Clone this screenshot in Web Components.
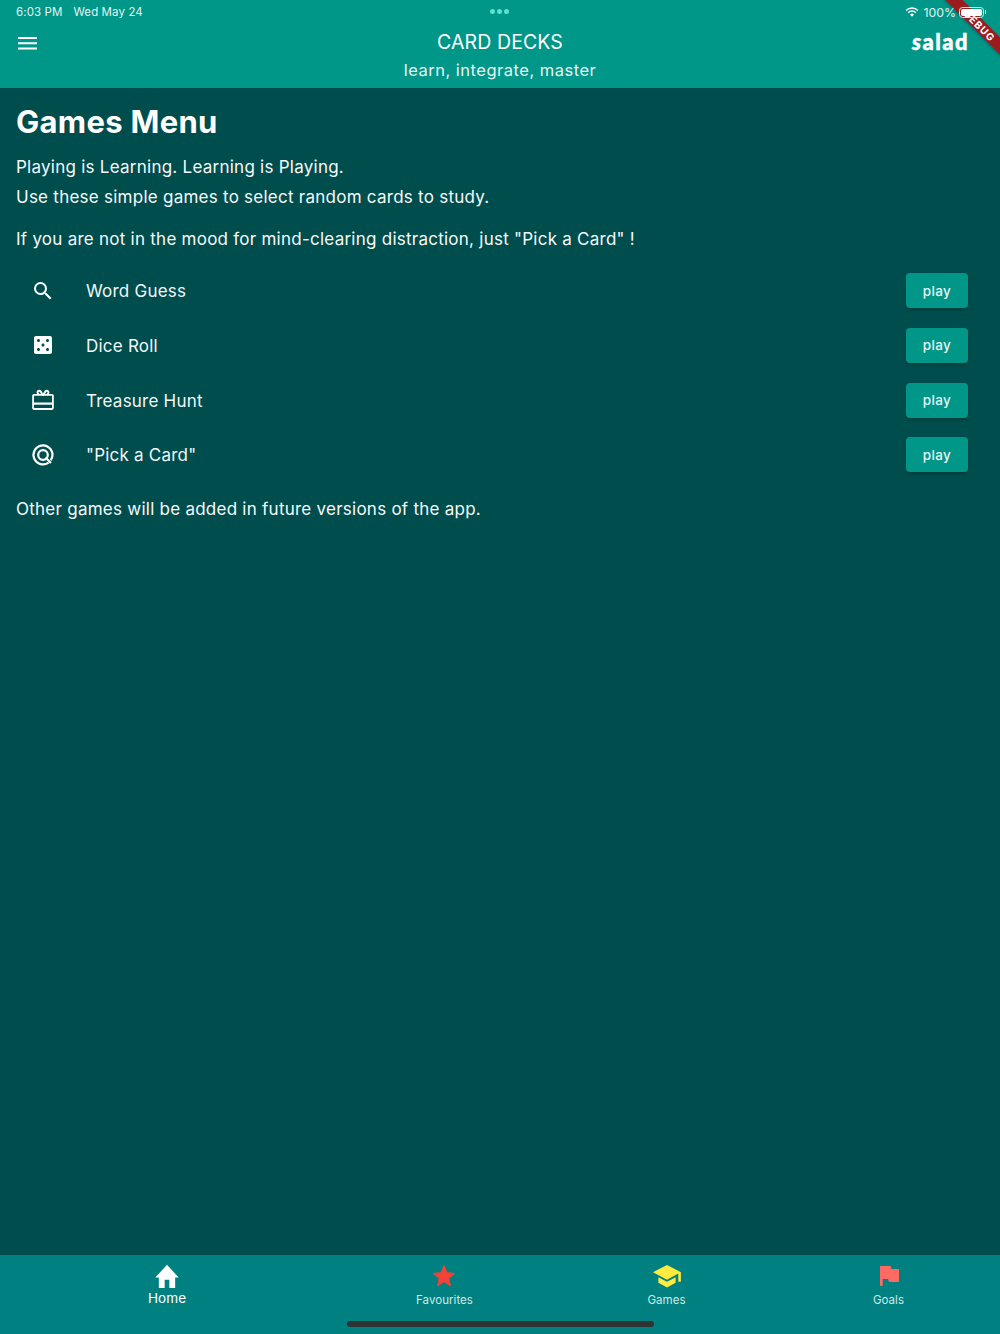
<!DOCTYPE html>
<html><head><meta charset="utf-8"><style>
html,body{margin:0;padding:0;height:100%}
body{font-family:Inter,"Liberation Sans",sans-serif;background:#004d4d;color:#fff}
</style></head><body>
<app-shell>
<status-bar slot="top"></status-bar>
<app-bar slot="top" title-text="CARD DECKS" sub="learn, integrate, master"></app-bar>
<games-page></games-page>
<bottom-nav slot="bottom"></bottom-nav>
</app-shell>
<debug-banner></debug-banner>
<script>
function def(name,html){customElements.define(name,class extends HTMLElement{constructor(){super();this.attachShadow({mode:'open'}).innerHTML=typeof html==='function'?html(this):html;}})}
def('app-shell',`<style>:host{display:flex;flex-direction:column;height:1334px;overflow:hidden}
main{flex:1;min-height:0}</style><slot name="top"></slot><main><slot></slot></main><slot name="bottom"></slot>`);
def('status-bar',`<style>:host{display:flex;height:24px;background:#009688;color:#e3f4f1;font-size:11.5px;align-items:center;padding:0 15px 0 16px;justify-content:space-between;position:relative;box-sizing:border-box}
.l{display:flex;gap:11px;letter-spacing:.1px}
.dots{position:absolute;left:490px;top:9px;display:flex;gap:2px}.dots i{width:5px;height:5px;border-radius:50%;background:#5fe0cf}
.r{display:flex;align-items:center;gap:4.500px;position:relative;z-index:2;font-size:12.300px}
.bat{width:25px;height:11px;border:1px solid #cfeeea;border-radius:3.5px;box-sizing:border-box;padding:1px;position:relative;margin-right:1px;margin-left:-1.500px}
.bat b{display:block;height:100%;background:#fff;border-radius:2px}
.bat:after{content:"";position:absolute;right:-3px;top:2.500px;width:1.5px;height:4px;background:#cfeeea}
</style><div class="l"><span>6:03 PM</span><span>Wed May 24</span></div>
<div class="dots"><i></i><i></i><i></i></div>
<div class="r"><svg width="14" height="10" viewBox="0 0 15 11"><path fill="none" stroke="#fff" stroke-width="1.6" d="M1 3.9a9.2 9.2 0 0 1 13 0M3.2 6.2a6 6 0 0 1 8.6 0"/><path fill="#fff" d="M7.5 10.8 5.3 8.3a3.1 3.1 0 0 1 4.4 0z"/></svg><span>100%</span><div class="bat"><b></b></div></div>`);
def('app-bar',t=>`<style>:host{display:flex;height:64px;background:#009688;position:relative;flex-direction:column;align-items:center;box-sizing:border-box;color:#fff}
.t{font-size:19.5px;line-height:24px;margin-top:6px;letter-spacing:.1px}
.s{font-size:16.5px;line-height:24px;margin-top:4px;color:#e6f5f3;letter-spacing:.5px}
.m{position:absolute;left:18px;top:13px;display:block}
.logo{position:absolute;left:912px;top:4px;font:900 22px/28px Lato,"DejaVu Sans",sans-serif;letter-spacing:1.5px;color:#fff;-webkit-text-stroke:.5px #fff}
.logo i{font-style:italic}
</style><svg class="m" width="19" height="13" viewBox="0 0 19 13"><path fill="#fff" d="M0 0h19v2H0zM0 5.2h19v2H0zM0 10.4h19v2H0z"/></svg>
<div class="t">${t.getAttribute('title-text')}</div><div class="s">${t.getAttribute('sub')}</div><div class="logo"><i>s</i>alad</div>`);
def('game-row',t=>`<style>:host{display:flex;align-items:center;height:54.67px;box-sizing:border-box;padding:0 32px 0 27px}
.i{width:32px;height:32px;margin-right:27px;display:flex;align-items:center;justify-content:center}
.x{flex:1;font-size:17px;letter-spacing:.22px;color:#f2f7f7;padding-top:1px}
.b{width:62px;height:35px;box-sizing:border-box;background:#009688;border-radius:4px;display:flex;align-items:center;justify-content:center;font-size:13.5px;font-weight:500;letter-spacing:.4px;color:#e4f5f2;box-shadow:0 2px 3px rgba(0,0,0,.22)}
</style><div class="i"><slot name="icon"></slot></div><div class="x"><slot></slot></div><div class="b">play</div>`);
def('games-page',`<style>:host{display:block;padding:16px 16px 0;color:#fff}
h1{font-size:31px;line-height:36px;font-weight:700;margin:0;letter-spacing:.3px}
p{margin:0;font-size:17px;line-height:30px;letter-spacing:.25px;color:#f7fafa}
.a{margin-top:12px}.g{margin-top:11.500px}
.list{margin:10px -16px 0}
.o{margin-top:11.500px}
svg{display:block}
</style><h1>Games Menu</h1>
<p class="a">Playing is Learning. Learning is Playing.</p>
<p>Use these simple games to select random cards to study.</p>
<p class="g">If you are not in the mood for mind-clearing distraction, just "Pick a Card" !</p>
<div class="list">
<game-row><svg slot="icon" width="24" height="24" viewBox="0 0 24 24"><path fill="#fff" d="M15.5 14h-.79l-.28-.27A6.47 6.47 0 0 0 16 9.5 6.5 6.5 0 1 0 9.5 16c1.61 0 3.09-.59 4.23-1.57l.27.28v.79l5 4.99L20.49 19l-4.99-5zm-6 0C7.01 14 5 11.99 5 9.5S7.01 5 9.5 5 14 7.01 14 9.5 11.99 14 9.5 14z"/></svg>Word Guess</game-row>
<game-row><svg slot="icon" width="24" height="24" viewBox="0 0 24 24"><path fill="#fff" d="M19 3H5c-1.1 0-2 .9-2 2v14c0 1.1.9 2 2 2h14c1.1 0 2-.9 2-2V5c0-1.1-.9-2-2-2zM7.5 18c-.83 0-1.5-.67-1.5-1.5S6.67 15 7.5 15s1.5.67 1.5 1.5S8.33 18 7.5 18zm0-9C6.67 9 6 8.33 6 7.5S6.67 6 7.5 6 9 6.67 9 7.5 8.33 9 7.5 9zm4.5 4.5c-.83 0-1.5-.67-1.5-1.5s.67-1.5 1.5-1.5 1.5.67 1.5 1.5-.67 1.5-1.5 1.5zm4.5 4.5c-.83 0-1.5-.67-1.5-1.5s.67-1.5 1.5-1.5 1.5.67 1.5 1.5-.67 1.5-1.5 1.5zm0-9c-.83 0-1.5-.67-1.5-1.5S15.67 6 16.5 6s1.5.67 1.5 1.5S17.33 9 16.5 9z"/></svg>Dice Roll</game-row>
<game-row><svg slot="icon" width="24" height="24" viewBox="0 0 24 24"><path fill="none" stroke="#fff" stroke-width="1.8" d="M3 6.900h18a.9.900 0 0 1 .9.9v12.300a.9.900 0 0 1-.9.9H3a.9.900 0 0 1-.9-.9V7.800a.9.900 0 0 1 .9-.9z"/><path fill="none" stroke="#fff" stroke-width="1.900" d="M12 7.500 9.500 3.200a1.800 1.800 0 0 0-3 1.500L8.200 7M12 7.500l2.500-4.300a1.800 1.800 0 0 1 3 1.500L15.800 7"/><path fill="#fff" d="M2.500 14.500h19v2.200h-19z"/></svg>Treasure Hunt</game-row>
<game-row><svg slot="icon" width="24" height="24" viewBox="0 0 24 24"><g fill="none" stroke="#fff" stroke-width="2.200"><path d="M17.600 19.600A9.500 9.500 0 1 1 21.500 12c0 2-.6 3.700-1.900 5.200"/><circle cx="12" cy="12" r="4.800"/><path d="M14.500 14.500 20 20"/></g></svg>"Pick a Card"</game-row>
</div>
<p class="o">Other games will be added in future versions of the app.</p>`);
def('nav-item',t=>`<style>:host{position:absolute;top:0;width:120px;margin-left:-60px;display:flex;flex-direction:column;align-items:center;color:#cdeae8;font-size:11.5px;letter-spacing:.05px}
.i{height:24px;margin-top:9px;display:flex}
.l{margin-top:4px;line-height:16px}
:host([active]){color:#fff;font-size:13.5px;letter-spacing:.1px}
:host([active]) .l{margin-top:1px;line-height:18px}
</style><div class="i"><slot name="icon"></slot></div><div class="l"><slot></slot></div>`);
def('bottom-nav',`<style>:host{display:block;height:79px;background:#008080;position:relative}
.h{position:absolute;left:347px;top:66px;width:307px;height:5.500px;border-radius:3px;background:#2e3333}
svg{display:block}
</style>
<nav-item active style="left:167px"><svg slot="icon" width="28" height="24" viewBox="0 0 24 20.600"><path fill="#fff" d="M10 20.600v-7h4v7h5v-9h3L12 .6 2 11.600h3v9z"/></svg>Home</nav-item>
<nav-item style="left:444.500px"><svg slot="icon" width="24" height="24" viewBox="0 0 24 24" style="margin-left:-1px"><path fill="#f44336" stroke="#f44336" stroke-linejoin="round" d="M12 17.600l6.500 4.300-1.700-7.500 5.700-5-7.600-.7L12 1.600 9.100 8.700l-7.600.7 5.700 5-1.700 7.500z"/></svg>Favourites</nav-item>
<nav-item style="left:666.500px"><svg slot="icon" width="28" height="24" viewBox="0 0 26 22.300"><path fill="#ffeb3b" d="M5 12.200v5.300l8 4.400 8-4.400v-5.300l-8 4.400zM13 .9 0 7.600l13 7 10.500-5.700v7.600h2.400V7.600z"/></svg>Games</nav-item>
<nav-item style="left:888.500px"><svg slot="icon" width="24" height="24" viewBox="0 0 24 24"><path fill="#ff6b63" stroke="#ff6b63" stroke-linejoin="round" d="M3.500 2.500v19h1.700v-7h6.400l.6 3H21.500V5.600h-7.500l-.6-3.100z"/></svg>Goals</nav-item>
<div class="h"></div>`);
def('debug-banner',`<style>:host{position:absolute;top:0;right:0;width:80px;height:80px;overflow:hidden;display:block;pointer-events:none;z-index:1}
div{position:absolute;width:120px;height:12px;left:.5px;top:21px;transform:rotate(45deg);background:#9b1b1f;color:#fff;font:700 10px/12px Inter,"Liberation Sans",sans-serif;letter-spacing:1px;text-indent:-4px;text-align:center;box-shadow:0 1px 3px rgba(0,0,0,.3)}
</style><div>DEBUG</div>`);
</script>
</body></html>
